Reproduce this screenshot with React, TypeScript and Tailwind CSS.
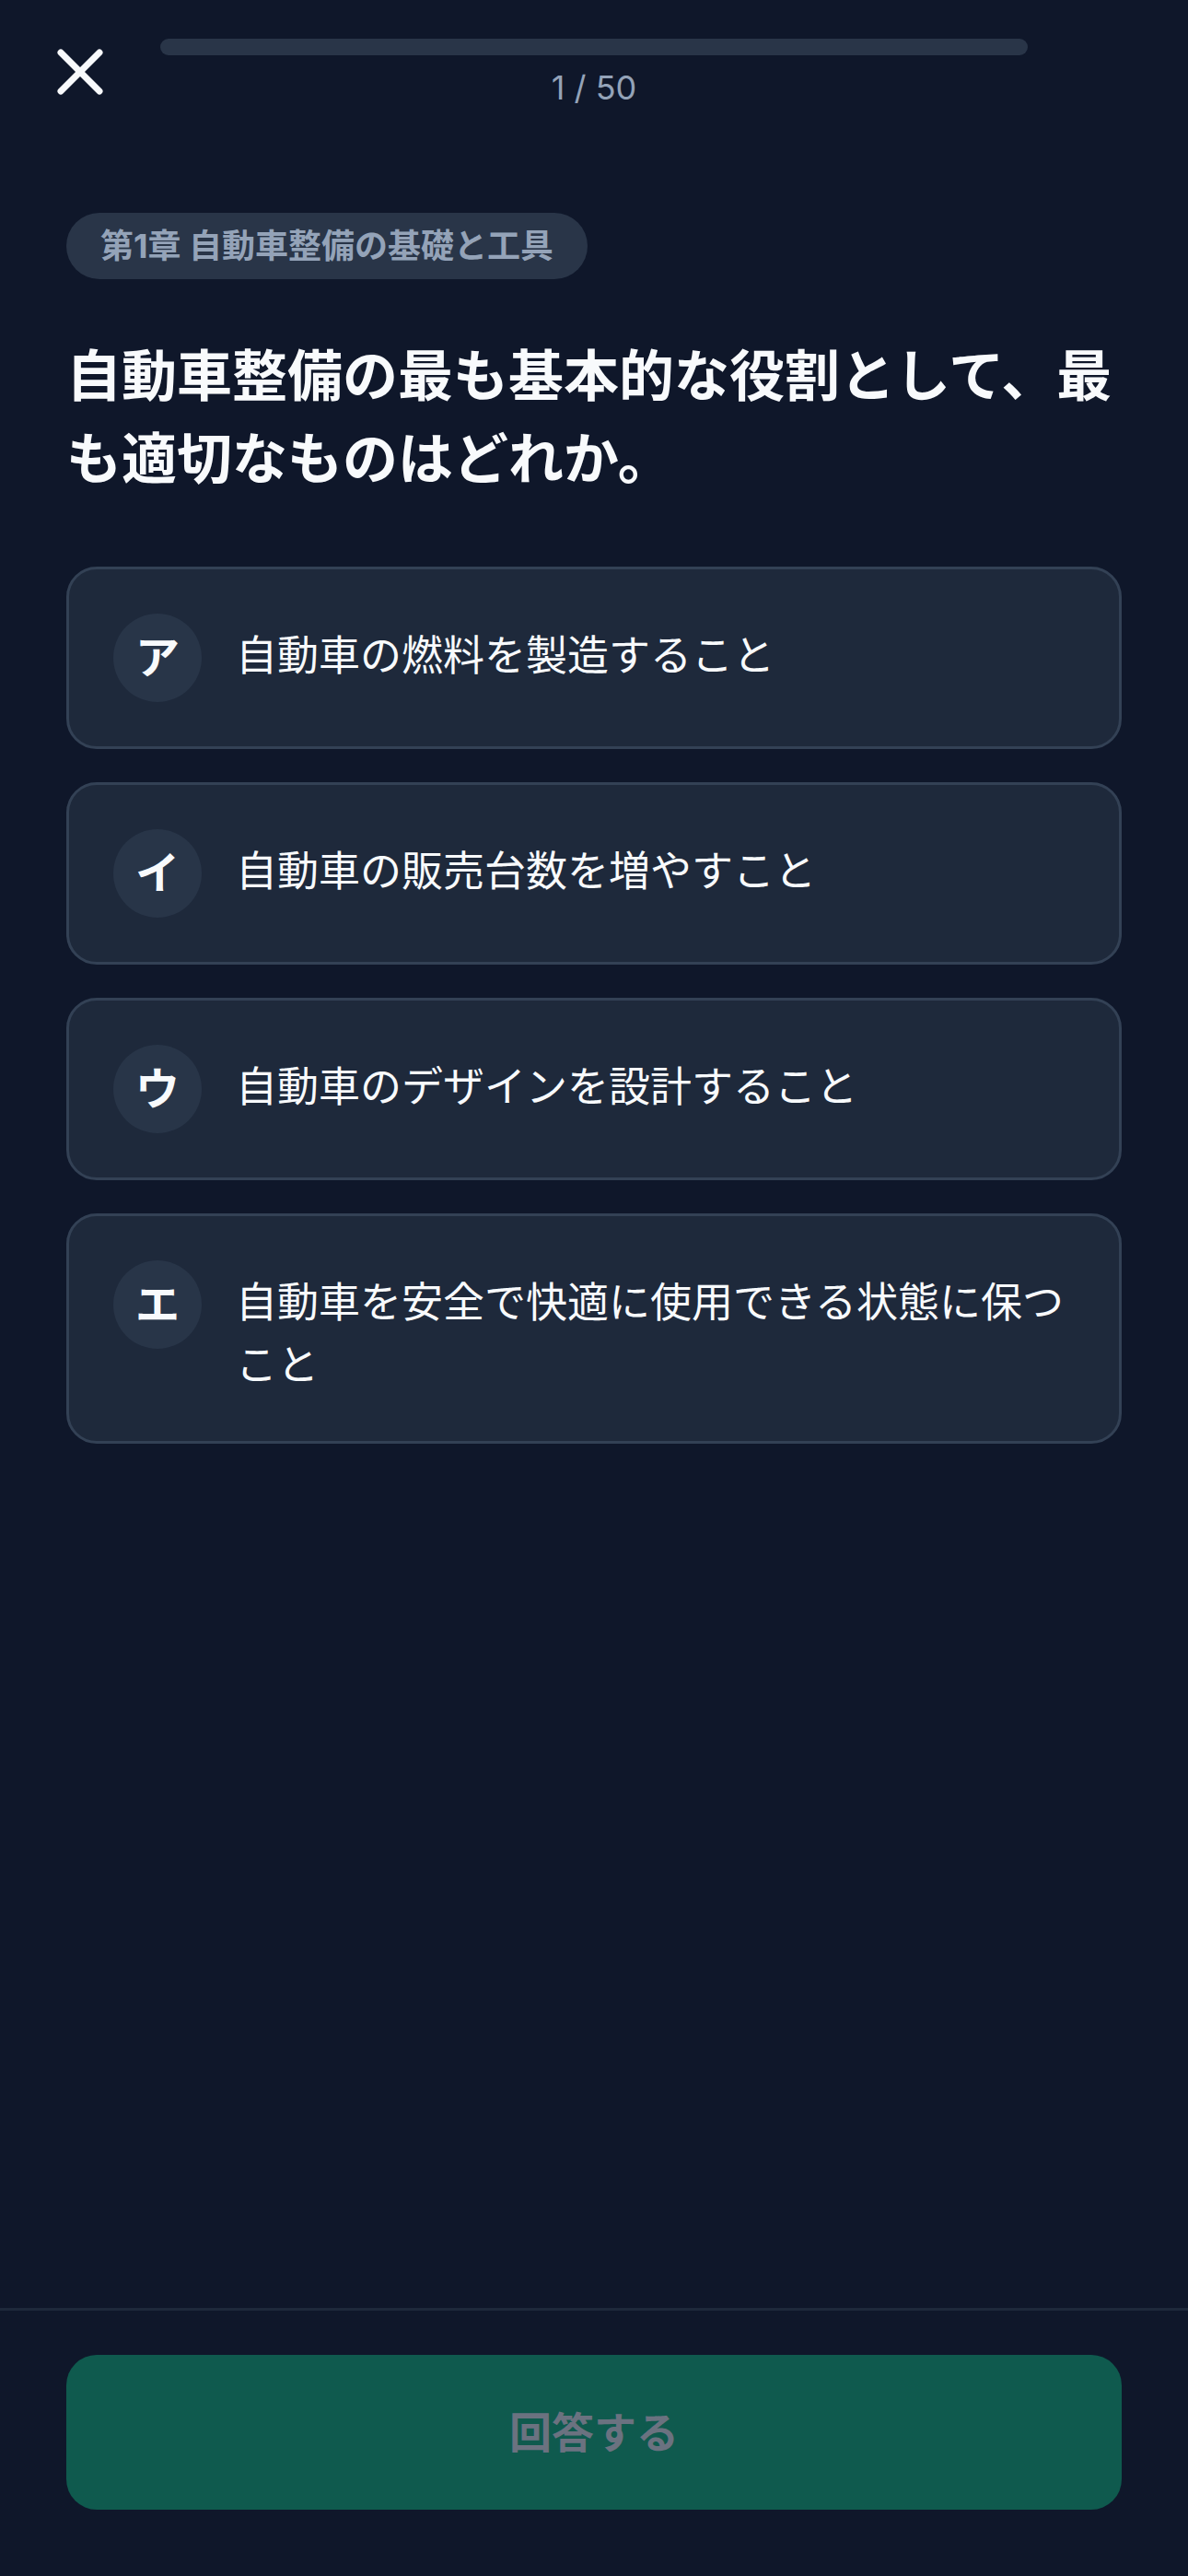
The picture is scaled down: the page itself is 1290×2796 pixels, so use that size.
import { X } from "lucide-react"

const font = { fontFamily: 'Inter, "Noto Sans CJK JP", sans-serif' }

const options = [
  { key: "ア", text: "自動車の燃料を製造すること" },
  { key: "イ", text: "自動車の販売台数を増やすこと" },
  { key: "ウ", text: "自動車のデザインを設計すること" },
  { key: "エ", text: "自動車を安全で快適に使用できる状態に保つこと" },
]

export default function App() {
  return (
    <div className="min-h-screen flex flex-col bg-[#0f172a] text-[#f8fafc]" style={font}>
      {/* header */}
      <header className="flex items-start gap-[45px] px-[45px] pt-[36px]">
        <button className="w-[84px] h-[84px] shrink-0 flex items-center justify-center text-[#f8fafc]">
          <X size={84} strokeWidth={2} />
        </button>
        <div className="flex-1 flex flex-col items-center pt-[6px]">
          <div className="w-full h-[18px] rounded-full bg-[#293548]" />
          <span className="mt-[11px] text-[36px] leading-[48px] text-[#94a3b8]">1 / 50</span>
        </div>
        <div className="w-[84px] shrink-0" />
      </header>

      <main className="flex-1 px-[72px] pt-[111px]">
        <span className="inline-flex items-center h-[72px] px-[37px] rounded-full bg-[#293548] text-[36px] font-bold text-[#94a3b8]">
          第1章 自動車整備の基礎と工具
        </span>

        <h1 className="mt-[60px] text-[60px] leading-[90px] font-bold text-[#f8fafc]">
          自動車整備の最も基本的な役割として、最も適切なものはどれか。
        </h1>

        <div className="mt-[72px] flex flex-col gap-[36px]">
          {options.map((o) => (
            <button
              key={o.key}
              className="flex items-start gap-[37px] p-[48px] rounded-[33px] border-[3px] border-[#334155] bg-[#1e293b] text-left"
            >
              <span className="w-[96px] h-[96px] shrink-0 rounded-full bg-[#283548] flex items-center justify-center text-[48px] font-bold text-[#f8fafc]">
                {o.key}
              </span>
              <span className="pt-[12px] text-[45px] leading-[68px] text-[#f8fafc]">{o.text}</span>
            </button>
          ))}
        </div>
      </main>

      {/* footer */}
      <footer className="border-t-[3px] border-[#1e293b] px-[72px] pt-[48px] pb-[72px]">
        <button
          disabled
          className="w-full h-[168px] rounded-[33px] bg-[#0f5a4e] text-[46px] font-bold text-[#6b7280]"
        >
          回答する
        </button>
      </footer>
    </div>
  )
}
